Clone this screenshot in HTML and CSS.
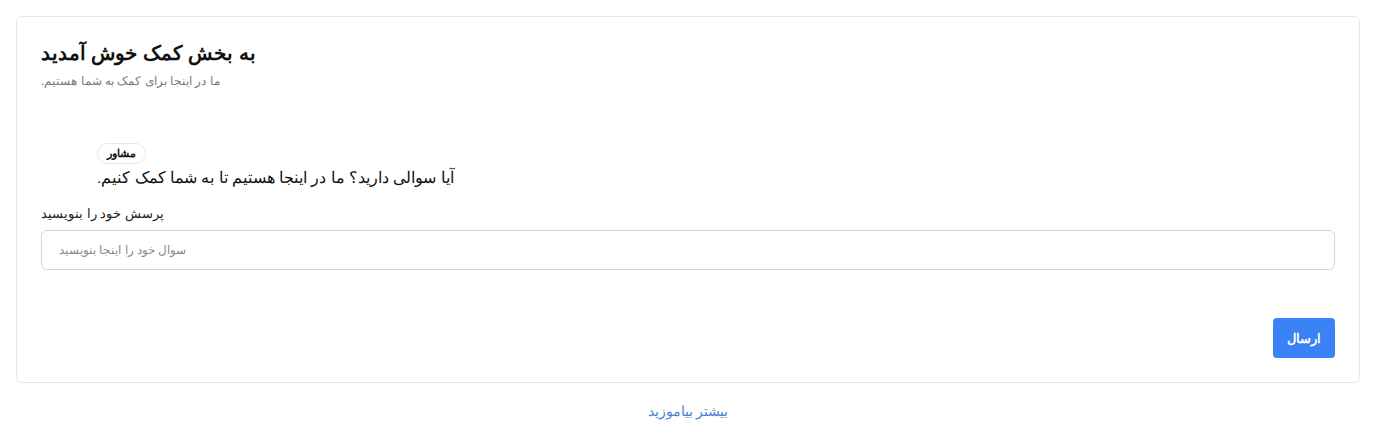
FILE: index.html
```html
<!DOCTYPE html>
<html lang="fa">
<head>
<meta charset="utf-8">
<title>بخش کمک</title>
<link rel="stylesheet" href="styles.css">
</head>
<body>
<div class="page">
  <section class="card">
    <header class="card-header">
      <h1 class="title">به بخش کمک خوش آمدید</h1>
      <p class="subtitle">ما در اینجا برای کمک به شما هستیم.</p>
    </header>
    <div class="chat">
      <div class="message">
        <span class="badge">مشاور</span>
        <p class="message-text">آیا سوالی دارید؟ ما در اینجا هستیم تا به شما کمک کنیم.</p>
      </div>
    </div>
    <div class="field">
      <label class="label" for="q">پرسش خود را بنویسید</label>
      <input class="input" id="q" type="text" placeholder="سوال خود را اینجا بنویسید">
    </div>
    <div class="actions">
      <button class="btn" type="button">ارسال</button>
    </div>
  </section>
  <div class="footer">
    <a class="link" href="#">بیشتر بیاموزید</a>
  </div>
</div>
</body>
</html>
```
FILE: styles.css
```css
* { box-sizing: border-box; }
html, body { margin: 0; padding: 0; background: #ffffff; }
body {
  font-family: "Liberation Sans", Arial, sans-serif;
  color: #111111;
}
.page { padding: 16px; }
.card {
  border: 1px solid #e5e7eb;
  border-radius: 6px;
  padding: 22px 24px 24px 24px;
  background: #fff;
}
.card-header { direction: rtl; text-align: left; }
.title {
  margin: 0;
  font-size: 19.5px;
  line-height: 28px;
  font-weight: 700;
  color: #111;
}
.subtitle {
  margin: 6px 0 0 0;
  font-size: 12px;
  line-height: 16px;
  color: #7a7a7a;
}
.chat { margin-top: 54px; padding-left: 56px; }
.message { direction: rtl; text-align: left; }
.badge {
  display: inline-block;
  border: 1px solid #e5e7eb;
  border-radius: 999px;
  padding: 0 9px;
  height: 21px;
  line-height: 19px;
  font-size: 11px;
  font-weight: 700;
  color: #111;
  background: #fff;
}
.message-text {
  margin: 2px 0 0 0;
  font-size: 15.5px;
  line-height: 24px;
  color: #111;
}
.field { margin-top: 14px; direction: rtl; text-align: left; }
.label {
  display: block;
  font-size: 13px;
  line-height: 20px;
  color: #222;
  margin-bottom: 6px;
}
.input {
  display: block;
  width: 100%;
  height: 40px;
  border: 1px solid #d1d5db;
  border-radius: 6px;
  padding: 0 17px;
  font-family: inherit;
  font-size: 12px;
  color: #111;
  direction: rtl;
  text-align: left;
  background: #fff;
  outline: none;
}
.input::placeholder { color: #8a8a8a; }
.actions { display: flex; justify-content: flex-end; margin-top: 48px; }
.btn {
  height: 40px;
  padding: 0 14px;
  border: none;
  border-radius: 4px;
  background: #3b82f6;
  color: #fff;
  font-family: inherit;
  font-size: 13px;
  font-weight: 700;
}
.footer { text-align: center; margin-top: 18px; }
.link {
  color: #4b7fd6;
  text-decoration: none;
  font-size: 14px;
  line-height: 20px;
}
```
